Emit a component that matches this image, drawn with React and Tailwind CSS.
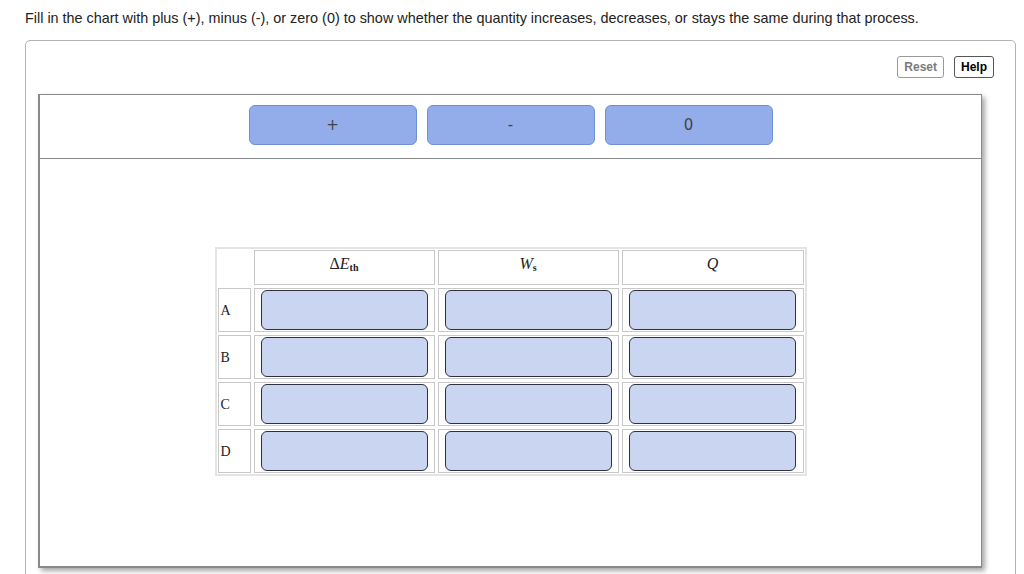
const rows = ["A", "B", "C", "D"];

const Slot = () => (
  <div className="h-[40px] w-[167px] rounded-[6px] border border-[#2f3040] bg-[#cad5f2]" />
);

const App = () => {
  return (
    <div className="min-h-[574px] overflow-hidden bg-white font-['Liberation_Sans',Arial,sans-serif]">
      <p className="pl-[25px] pt-[10px] text-[14.4px] leading-[17px] text-[#222]">
        Fill in the chart with plus (+), minus (-), or zero (0) to show whether the quantity increases, decreases, or stays the same during that process.
      </p>
      <div className="ml-[25px] mt-[13px] w-[991px] rounded-[5px] border border-[#b4b4b4] pb-[20px]">
        <div className="flex justify-end gap-[10px] pr-[21px] pt-[15px]">
          <button className="h-[22px] rounded-[3px] border border-[#9a9a9a] px-[6px] text-[12px] font-bold text-[#7a7a7a]">
            Reset
          </button>
          <button className="h-[22px] rounded-[3px] border border-[#555] px-[6px] text-[12px] font-bold text-black">
            Help
          </button>
        </div>
        <div className="ml-[12px] mt-[16px] h-[474px] w-[944px] border-b-2 border-l-2 border-r border-t border-[#8a8a8a] bg-white shadow-[3px_3px_5px_rgba(0,0,0,0.35)]">
          <div className="flex h-[64px] justify-center gap-[10px] border-b border-[#8a8a8a] pt-[10px]">
            {["+", "-", "0"].map((s) => (
              <div
                key={s}
                className="flex h-[40px] w-[168px] items-center justify-center rounded-[6px] border border-[#6f8fd4] bg-[#93acea] font-['DejaVu_Sans',sans-serif] text-[15px] text-[#444]"
              >
                {s}
              </div>
            ))}
          </div>
          <div className="flex justify-center pt-[88px]">
            <div className="grid grid-cols-[33px_181px_181px_182px] gap-[3px] border-2 border-[#e4e4e4] p-[1px]">
              <div />
              <div className="flex h-[35px] items-center justify-center border border-[#c8c8c8] pb-[8px] font-['Liberation_Serif',serif] text-[16px] text-[#222]">
                <span>Δ<i>E</i><sub className="text-[10px] font-bold">th</sub></span>
              </div>
              <div className="flex h-[35px] items-center justify-center border border-[#c8c8c8] pb-[8px] font-['Liberation_Serif',serif] text-[16px] text-[#222]">
                <span><i>W</i><sub className="text-[10px] font-bold">s</sub></span>
              </div>
              <div className="flex h-[35px] items-center justify-center border border-[#c8c8c8] pb-[8px] font-['Liberation_Serif',serif] text-[16px] text-[#222]">
                <i>Q</i>
              </div>
              {rows.map((r) => (
                <div key={r} className="contents">
                  <div className="flex h-[44px] items-center border border-[#c8c8c8] pl-[2px] font-['Liberation_Serif',serif] text-[14px] text-[#222]">
                    {r}
                  </div>
                  {[0, 1, 2].map((c) => (
                    <div key={c} className="flex h-[44px] items-center justify-center border border-[#c8c8c8]">
                      <Slot />
                    </div>
                  ))}
                </div>
              ))}
            </div>
          </div>
        </div>
      </div>
    </div>
  );
};

export default App;
